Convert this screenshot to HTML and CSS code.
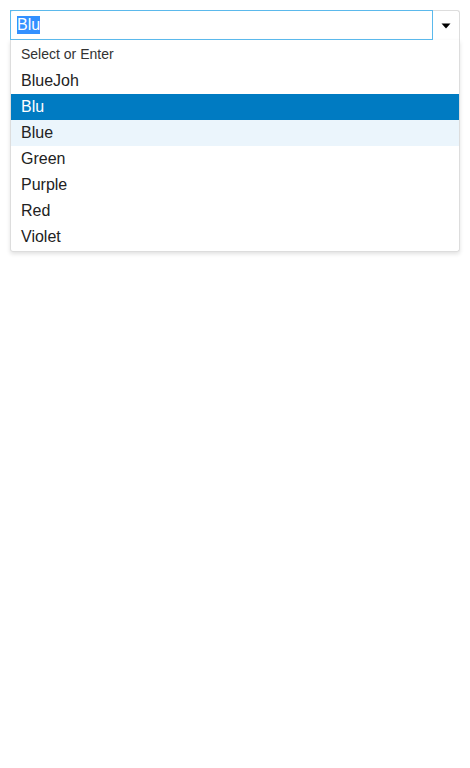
FILE: index.html
```html
<!DOCTYPE html>
<html>
<head>
<meta charset="utf-8">
<link rel="stylesheet" href="styles.css">
</head>
<body>
<div class="combo">
  <div class="control">
    <div class="input"><span class="sel">Blu</span></div>
    <div class="btn">
      <svg width="10" height="6" viewBox="0 0 10 6"><path d="M0.5 0.5h9L5 5.5z" fill="#000"/></svg>
    </div>
  </div>
  <div class="menu">
    <div class="header">Select or Enter</div>
    <div class="item">BlueJoh</div>
    <div class="item active">Blu</div>
    <div class="item hover">Blue</div>
    <div class="item">Green</div>
    <div class="item">Purple</div>
    <div class="item">Red</div>
    <div class="item">Violet</div>
  </div>
</div>
</body>
</html>
```
FILE: styles.css
```css
html, body {
  margin: 0;
  padding: 0;
  background: #fff;
}
body {
  padding: 10px;
  font-family: "Liberation Sans", Arial, sans-serif;
  color: #222;
}
.combo {
  width: 450px;
}
.control {
  display: flex;
  height: 30px;
  border: 1px solid #ddd;
  border-bottom: none;
  border-radius: 3px 3px 0 0;
  box-sizing: border-box;
}
.input {
  flex: 1;
  margin: -1px 0 0 -1px;
  height: 30px;
  box-sizing: border-box;
  border: 1px solid #5bb9ec;
  padding: 0 0 0 6px;
  display: flex;
  align-items: center;
  font-size: 16px;
}
.sel {
  background: #3390ff;
  color: #fff;
  line-height: 18px;
}
.btn {
  width: 26px;
  display: flex;
  align-items: center;
  justify-content: center;
}
.btn svg {
  display: block;
  margin-left: -1px;
}
.menu {
  border: 1px solid #ddd;
  border-top: none;
  border-radius: 0 0 3px 3px;
  box-shadow: 0 2px 4px rgba(0,0,0,0.12);
  padding-bottom: 1px;
}
.header {
  height: 28px;
  line-height: 28px;
  padding-left: 10px;
  font-size: 14px;
  color: #333;
}
.item {
  height: 26px;
  line-height: 26px;
  padding-left: 10px;
  font-size: 16px;
  color: #222;
}
.item.active {
  background: #007bc2;
  color: #fff;
}
.item.hover {
  background: #ebf5fc;
}
```
